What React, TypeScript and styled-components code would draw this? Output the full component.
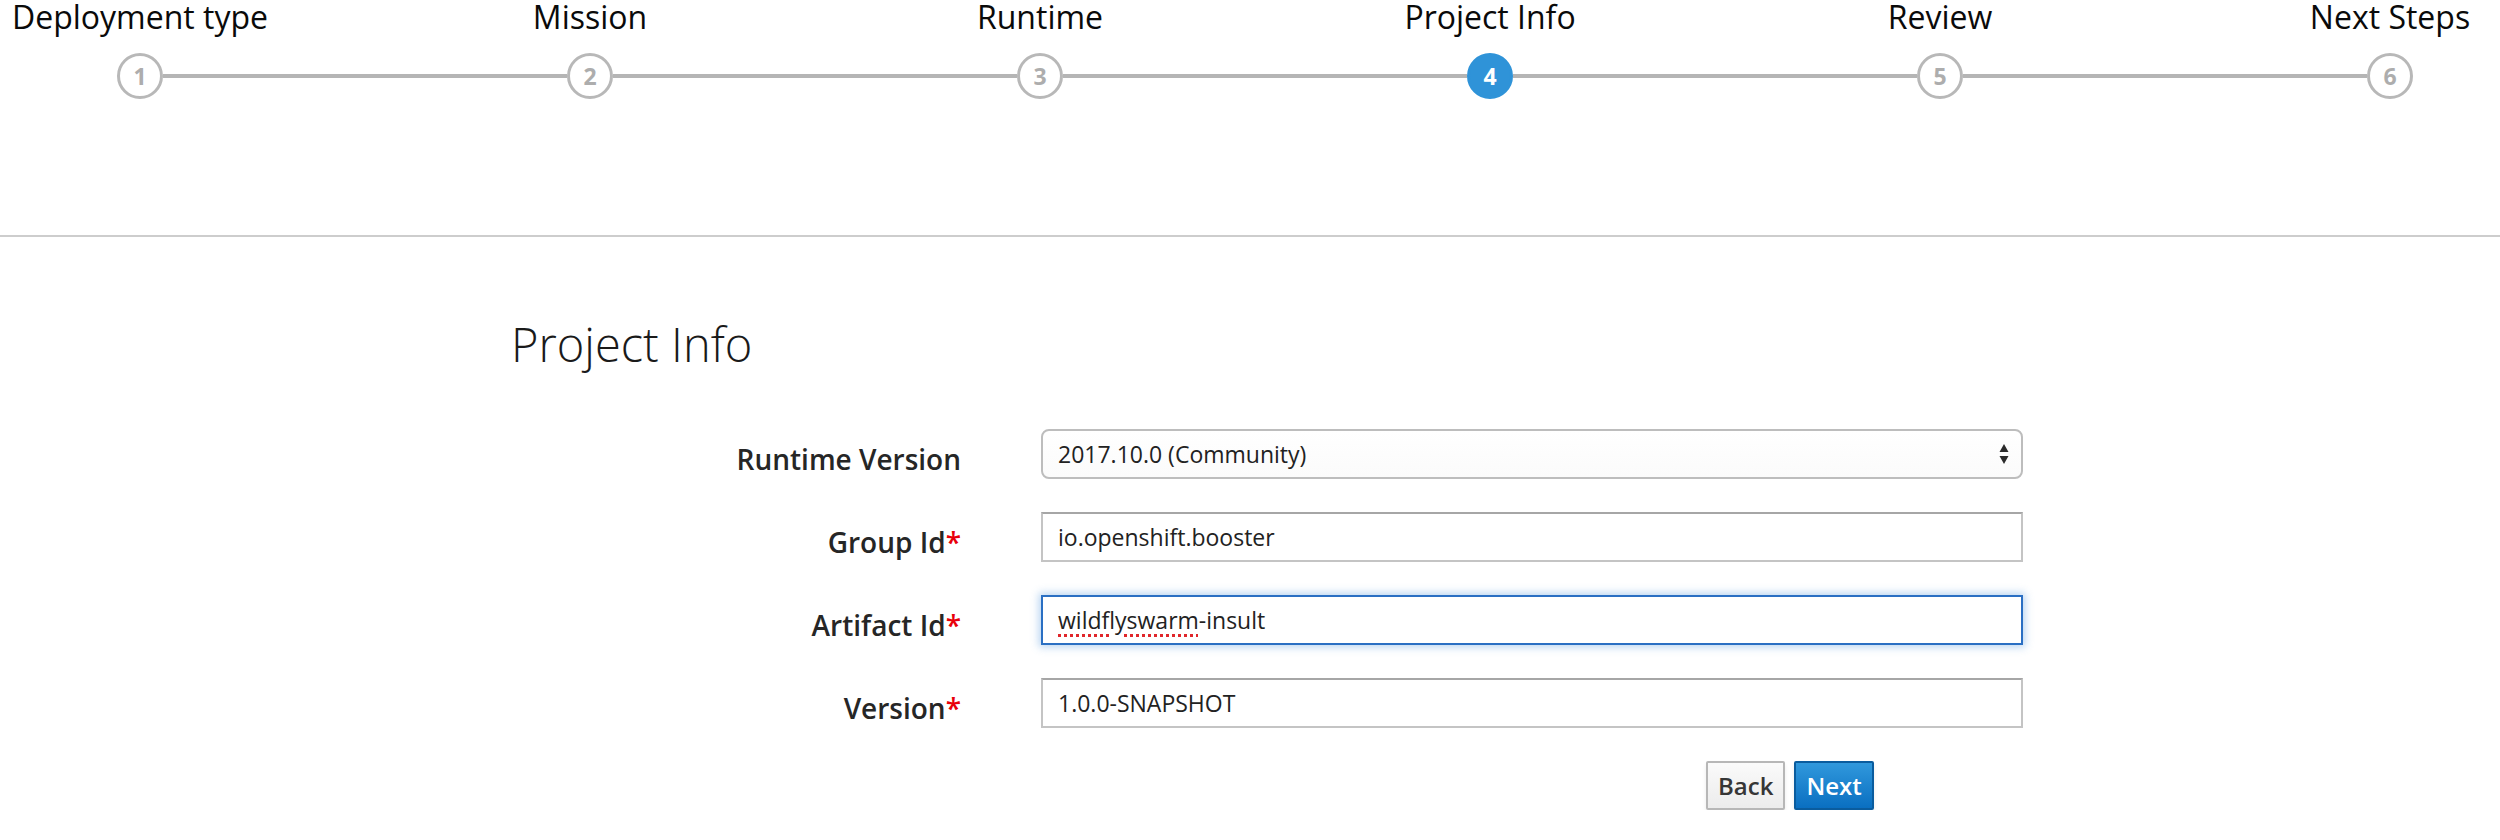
import React from 'react';
import styled, { createGlobalStyle, css } from 'styled-components';

const GlobalStyle = createGlobalStyle`
  html, body { margin: 0; padding: 0; background: #fff; }
  body { font-family: "Open Sans", "Noto Sans", sans-serif; color: #363636; }
`;

const Page = styled.div`
  width: 2500px;
`;

const WizardHeader = styled.header`
  height: 235px;
  border-bottom: 2px solid #cdcdcd;
`;

const StepsRow = styled.ol`
  list-style: none;
  margin: 0;
  padding: 0 87px 0 117px;
  display: flex;
  align-items: flex-end;
`;

const Step = styled.li`
  flex: none;
  width: 46px;
  display: flex;
  flex-direction: column;
  align-items: center;
`;

const StepLabel = styled.span`
  font-size: 32px;
  line-height: 38px;
  margin-top: -2px;
  margin-bottom: 17px;
  white-space: nowrap;
  color: #0a0a0a;
`;

const StepCircle = styled.span<{ $active?: boolean }>`
  width: 46px;
  height: 46px;
  box-sizing: border-box;
  border-radius: 50%;
  border: 3px solid #b8b8b8;
  background: #fff;
  color: #adadad;
  display: flex;
  align-items: center;
  justify-content: center;
  font-weight: 700;
  font-size: 23px;
  ${(p) =>
    p.$active &&
    css`
      background: #2f93d8;
      border-color: #2f93d8;
      color: #fff;
    `}
`;

const Connector = styled.li`
  flex: 1;
  height: 4px;
  margin-bottom: 21px;
  background: #b5b5b5;
`;

const Content = styled.main`
  padding-left: 511px;
`;

const Title = styled.h1`
  margin: 79px 0 0;
  font-size: 47px;
  line-height: 56px;
  font-weight: 300;
  color: #1a1a1a;
`;

const Form = styled.form`
  margin-top: 57px;
  display: grid;
  grid-template-columns: 450px 982px;
  column-gap: 80px;
  row-gap: 33px;
`;

const Label = styled.label`
  text-align: right;
  font-weight: 600;
  font-size: 28px;
  line-height: 40px;
  padding-top: 10px;
  color: #262626;
`;

const Required = styled.span`
  color: #e8000b;
`;

const fieldBase = css`
  box-sizing: border-box;
  width: 100%;
  height: 50px;
  margin: 0;
  padding: 0 15px;
  font-family: "Open Sans", "Noto Sans", sans-serif;
  font-size: 23px;
  color: #222;
  background: #fff;
`;

const TextInput = styled.input`
  ${fieldBase}
  border: 2px solid #c4c4c4;
  border-top-color: #a6a6a6;
  outline: none;
`;

const FocusedField = styled.div`
  ${fieldBase}
  display: flex;
  align-items: center;
  border: 2px solid #2a6fc3;
  box-shadow: 0 0 8px 2px rgba(94, 158, 225, 0.45);
`;

const SpellError = styled.span`
  text-decoration: underline dotted #e0262b;
  text-decoration-thickness: 3px;
  text-underline-offset: 5px;
`;

const SelectWrap = styled.div`
  position: relative;
`;

const Select = styled.select`
  ${fieldBase}
  appearance: none;
  -webkit-appearance: none;
  border: 2px solid #bdbdbd;
  border-radius: 8px;
  background: linear-gradient(#ffffff, #fbfbfb);
  outline: none;
`;

const SelectArrows = styled.svg`
  position: absolute;
  right: 14px;
  top: 50%;
  transform: translateY(-50%);
  pointer-events: none;
`;

const ButtonRow = styled.div`
  grid-column: 2;
  display: flex;
  gap: 9px;
  padding-left: 665px;
`;

const Button = styled.button<{ $primary?: boolean }>`
  height: 49px;
  box-sizing: border-box;
  padding: 0 10px;
  font-family: "Open Sans", "Noto Sans", sans-serif;
  font-size: 24px;
  font-weight: 600;
  border-radius: 2px;
  border: 2px solid #b7b7b7;
  color: #363636;
  background: linear-gradient(#fafafa, #ececec);
  box-shadow: 0 3px 4px rgba(0, 0, 0, 0.08);
  ${(p) =>
    p.$primary &&
    css`
      color: #fff;
      border-color: #0a5c9e;
      background: linear-gradient(#3098dc, #0a6fc1);
    `}
`;

const steps = ['Deployment type', 'Mission', 'Runtime', 'Project Info', 'Review', 'Next Steps'];

export default function App() {
  return (
    <Page>
      <GlobalStyle />
      <WizardHeader>
        <StepsRow>
          {steps.map((s, i) => (
            <React.Fragment key={s}>
              {i > 0 && <Connector aria-hidden />}
              <Step>
                <StepLabel>{s}</StepLabel>
                <StepCircle $active={i === 3}>{i + 1}</StepCircle>
              </Step>
            </React.Fragment>
          ))}
        </StepsRow>
      </WizardHeader>
      <Content>
        <Title>Project Info</Title>
        <Form onSubmit={(e) => e.preventDefault()}>
          <Label>Runtime Version</Label>
          <SelectWrap>
            <Select defaultValue="2017.10.0">
              <option value="2017.10.0">2017.10.0 (Community)</option>
            </Select>
            <SelectArrows width="10" height="22" viewBox="0 0 10 22">
              <path d="M5 1 L9.5 9 L0.5 9 Z" fill="#2b2b2b" />
              <path d="M0.5 13 L9.5 13 L5 21 Z" fill="#2b2b2b" />
            </SelectArrows>
          </SelectWrap>

          <Label>
            Group Id<Required>*</Required>
          </Label>
          <TextInput defaultValue="io.openshift.booster" />

          <Label>
            Artifact Id<Required>*</Required>
          </Label>
          <FocusedField>
            <SpellError>wildflyswarm</SpellError>-insult
          </FocusedField>

          <Label>
            Version<Required>*</Required>
          </Label>
          <TextInput defaultValue="1.0.0-SNAPSHOT" />

          <ButtonRow>
            <Button type="button">Back</Button>
            <Button type="submit" $primary>
              Next
            </Button>
          </ButtonRow>
        </Form>
      </Content>
    </Page>
  );
}
